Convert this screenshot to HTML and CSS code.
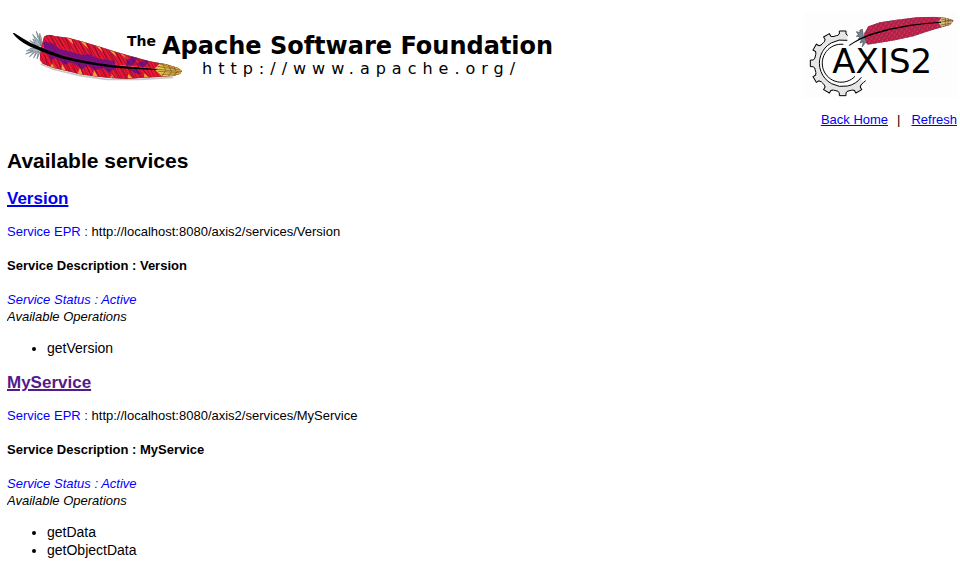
FILE: index.html
```html
<!DOCTYPE html>
<html lang="en">
<head>
    <meta charset="UTF-8">
    <meta name="viewport" content="width=device-width, initial-scale=1.0">
    <title>List Services</title>
    <link rel="stylesheet" href="styles.css">
</head>
<body>
    <header class="banner">
        <svg class="asf-logo" viewBox="7 12 550 86" role="img" aria-label="The Apache Software Foundation">
            <defs>
                <!-- barbs above and below the quill -->
                <pattern id="barbsTop" width="11" height="60" patternUnits="userSpaceOnUse" patternTransform="skewX(32)">
                    <rect width="11" height="60" fill="#f3142f"/>
                    <rect x="6" width="3" height="60" fill="#d81840"/>
                    <rect x="9" width="2" height="60" fill="#7a1030"/>
                </pattern>
                <pattern id="barbsLow" width="11" height="60" patternUnits="userSpaceOnUse" patternTransform="skewX(28)">
                    <rect width="11" height="60" fill="#f5102c"/>
                    <rect x="5" width="3" height="60" fill="#e41c40"/>
                    <rect x="9" width="2" height="60" fill="#8a1030"/>
                </pattern>
                <clipPath id="vane">
                    <path d="M132 50 Q145 40 163 48 L205 53 L250 65 L300 80 L350 96 L400 110 L450 124 L500 133 L535 144 L546 153 L540 162 L520 168 L475 171 L420 174 L380 177 L330 174 L280 169 L240 163 L200 153 L160 144 L128 131 L119 119 L121 90 Z"/>
                </clipPath>
            </defs>
            <g transform="translate(0 20) scale(0.3333)">
                <path d="M122 132 L160 148 L240 167 L320 178 L420 178 L520 172" fill="none" stroke="#c8c8c8" stroke-width="5"/>
                <g clip-path="url(#vane)">
                    <path d="M110 35 H560 V150 L450 145 L300 130 L190 105 L110 75 Z" fill="url(#barbsTop)"/>
                    <path d="M110 75 L190 105 L300 130 L450 145 L560 150 V185 H110 Z" fill="url(#barbsLow)"/>
                    <path d="M132 64 L158 70 L180 88 L215 96 L245 104 L266 103 L300 117 L345 123 L345 137 L300 133 L240 121 L180 105 L132 88 Z M136 89 L180 108 L240 126 L300 135 L350 143 L325 158 L310 143 L285 151 L262 136 L247 148 L215 126 L194 134 L170 114 L153 119 Z M380 122 L400 108 L415 112 L398 136 L378 137 Z M408 132 L435 119 L448 124 L430 143 Z M385 147 L410 146 L425 162 L405 160 Z" fill="#66108a" opacity=".85"/>
                    <path d="M200 54 l14 4 l7 16 z M240 62 l16 6 l8 18 z M285 76 l15 5 l10 16 z M326 90 l17 6 l8 15 z M360 100 l14 5 l8 14 z M150 141 l18 6 l-10 -18 z M182 151 l17 4 l-12 -22 z M232 162 l17 4 l-9 -22 z M278 169 l17 2 l-13 -20 z M330 174 l14 2 l-9 -15 z M382 177 l16 -2 l-13 -13 z M432 174 l15 -2 l-14 -12 z" fill="#f5a13c"/>
                    <g fill="none" stroke="#3b0d2c" stroke-width="1.5">
                        <path d="M150 45 l18 30 M172 48 l18 32 M194 52 l18 35 M216 57 l17 38 M238 62 l17 39 M260 68 l17 38 M282 75 l17 38 M304 82 l17 37 M326 89 l17 34 M348 96 l17 31 M370 101 l16 29 M392 108 l15 26 M414 114 l14 22 M436 120 l14 19"/>
                        <path d="M143 139 l-9 -35 M164 146 l-14 -36 M186 151 l-15 -35 M208 156 l-15 -36 M230 162 l-15 -36 M252 166 l-16 -35 M274 169 l-16 -34 M296 172 l-17 -34 M318 174 l-17 -33 M340 176 l-18 -33 M362 177 l-18 -32 M384 177 l-19 -31 M406 176 l-20 -30 M428 175 l-20 -28 M450 174 l-22 -27"/>
                    </g>
                    <path d="M463 147 L486 124 L550 136 V175 H492 Z" fill="#e6c04c"/>
                    <path d="M463 147 L545 155 M472 139 L540 150 M480 132 L526 146 M475 154 L538 158 M485 163 L530 162 M487 130 l10 20 M505 134 l8 18 M522 140 l6 14 M486 168 l12 -17 M504 170 l12 -17 M522 167 l10 -12" fill="none" stroke="#74511c" stroke-width="2"/>
                    <path d="M132 50 Q145 40 163 48 L205 53 L250 65 L300 80 L350 96 L400 110 L450 124 L500 133 L535 144 L546 153 L540 162 L520 168 L475 171 L420 174 L380 177 L330 174 L280 169 L240 163 L200 153 L160 144 L128 131 L119 119 L121 90 Z" fill="none" stroke="#6c3030" stroke-width="2"/>
                </g>
                <path d="M124 78 L112 58 L98 43 L107 63 L98 57 L105 70 L89 61 L103 75 Z M124 78 L119 55 L109 34 L113 53 M124 80 L125 57 L119 40 L117 65 M118 86 L94 84 L79 93 L98 91 L77 102 L101 95 L88 111 L108 94 L101 114 L115 93 L111 117 L124 89 Z" fill="#a4b2bb" stroke="#4e6470" stroke-width="1.5"/>
                <path d="M38 40 L43 39 Q64 53 94 70 Q140 91 190 108 Q260 126 340 136 Q410 143 465 146 L475 150 Q390 148 330 142 Q248 132 183 115 Q137 101 88 79 Q55 63 38 40 Z" fill="#000"/>
            </g>
            <text class="asf-the" x="127" y="46">The</text>
            <text class="asf-name" x="162" y="54">Apache Software Foundation</text>
            <text class="asf-url" x="202" y="74">http://www.apache.org/</text>
        </svg>

        <svg class="axis-logo" viewBox="12 20 459 258" role="img" aria-label="Axis2">
            <defs>
                <g id="tooth">
                    <path d="M-15 -83 L-10 -88 L-10 -97 H10 L10 -88 L15 -83 L13 -76 H-13 Z" fill="#e6e6e6"/>
                    <path d="M-15 -84 L-10 -88 L-10 -97 H10 L10 -88 L15 -84" fill="none" stroke="#000" stroke-width="3"/>
                </g>
                <clipPath id="vane2">
                    <path d="M193 84 L205 63 L240 51 L290 43 L350 36 L400 34 L435 37 L461 45 L450 59 L420 67 L385 78 L340 93 L285 105 L235 113 L203 118 L192 104 Z"/>
                </clipPath>
                <pattern id="barbsAxis" width="10" height="12" patternUnits="userSpaceOnUse" patternTransform="rotate(35)">
                    <rect width="10" height="12" fill="#c61c43"/>
                    <rect x="5" width="3" height="12" fill="#902a55"/>
                    <rect x="2" y="4" width="3" height="4" fill="#e34b60"/>
                </pattern>
            </defs>
            <rect x="12" y="20" width="459" height="258" fill="#fdfdfd"/>
            <path d="M142 90 A85 85 0 1 0 191 231 L180 220 A70 70 0 1 1 142 105 Z" fill="#e6e6e6"/>
            <path d="M142 90 A85 85 0 1 0 191 231 L197 226" fill="none" stroke="#000" stroke-width="3"/>
            <g transform="translate(128 174)">
                <use href="#tooth"/>
                <use href="#tooth" transform="rotate(-30)"/>
                <use href="#tooth" transform="rotate(-60)"/>
                <use href="#tooth" transform="rotate(-90)"/>
                <use href="#tooth" transform="rotate(-120)"/>
                <use href="#tooth" transform="rotate(-150)"/>
                <use href="#tooth" transform="rotate(180)"/>
                <use href="#tooth" transform="rotate(150)"/>
            </g>
            <path d="M142 105 A70 70 0 1 0 184 216 M130 117 A57 57 0 1 0 165 213" fill="none" stroke="#000" stroke-width="3"/>
            <g clip-path="url(#vane2)">
                <rect x="190" y="30" width="275" height="90" fill="url(#barbsAxis)"/>
                <path d="M414 51 L426 34 H465 V65 H424 Z" fill="#d9bd75"/>
                <path d="M414 51 L458 45 M424 42 l28 5 M422 59 l30 -5 M436 38 v25 M446 39 l-3 22" fill="none" stroke="#66522c" stroke-width="2"/>
                <path d="M193 84 L205 63 L240 51 L290 43 L350 36 L400 34 L435 37 L461 45 L450 59 L420 67 L385 78 L340 93 L285 105 L235 113 L203 118 L192 104 Z" fill="none" stroke="#704052" stroke-width="4" stroke-dasharray="5 3"/>
            </g>
            <path d="M190 91 L187 72 L179 75 L181 82 L169 79 L175 88 L169 93 L181 94 L175 101 L187 98 L180 113 L190 109 L187 124 L199 108 Z" fill="#78858e" stroke="#3f4b57" stroke-width="2"/>
            <path d="M146 120 Q176 98 212 85 Q270 67 330 58 Q380 52 423 49 L423 52 Q377 55 332 62 Q272 71 216 89 Q178 102 149 121 Z" fill="#000"/>
            <text class="axis-name" x="97" y="203">AXIS2</text>
        </svg>
    </header>

    <nav class="links">
        <a href="index.html">Back Home</a>
        <span>|</span>
        <a href="index.html">Refresh</a>
    </nav>

    <h1>Available services</h1>

    <section class="service">
        <h2><a href="#version" id="version">Version</a></h2>
        <p class="epr"><span class="blue">Service EPR :</span> http://localhost:8080/axis2/services/Version</p>
        <h3>Service Description : Version</h3>
        <p class="status"><i class="blue">Service Status : Active</i><br>
        <i>Available Operations</i></p>
        <ul>
            <li>getVersion</li>
        </ul>
    </section>

    <section class="service">
        <h2><a class="seen" href="#myservice" id="myservice">MyService</a></h2>
        <p class="epr"><span class="blue">Service EPR :</span> http://localhost:8080/axis2/services/MyService</p>
        <h3>Service Description : MyService</h3>
        <p class="status"><i class="blue">Service Status : Active</i><br>
        <i>Available Operations</i></p>
        <ul>
            <li>getData</li>
            <li>getObjectData</li>
        </ul>
    </section>
</body>
</html>
```

FILE: styles.css
```css
body {
    margin: 12px 3px 0 7px;
    background: #fff;
    color: #000;
    font-family: "Liberation Sans", Arial, Helvetica, sans-serif;
    font-size: 13px;
    line-height: 17px;
}

/* Logos */
.banner {
    display: flex;
    justify-content: space-between;
    align-items: flex-start;
}
.asf-logo {
    width: 550px;
    height: 86px;
}
.axis-logo {
    width: 153px;
    height: 86px;
}
.asf-the, .asf-name, .asf-url, .axis-name {
    font-family: "DejaVu Sans", Verdana, sans-serif;
}
.asf-the {
    font-size: 14px;
    font-weight: bold;
}
.asf-name {
    font-size: 24px;
    font-weight: bold;
}
.asf-url {
    font-size: 16px;
    letter-spacing: 6px;
}
.axis-name {
    font-size: 102px;
}

/* Links */
a {
    color: #0000ee;
}
a.seen {
    color: #551a8b;
}
.links {
    display: flex;
    justify-content: flex-end;
    gap: 9px;
    margin-top: 13px;
}
.links span {
    margin-right: 2px;
}

/* Headings */
h1 {
    margin: 20px 0 15px;
    font-size: 21px;
    line-height: 26px;
}
h2 {
    margin: 0 0 14px;
    font-size: 17px;
    line-height: 20px;
}
h2 a {
    text-decoration-thickness: 2px;
}
h3 {
    margin: 17px 0;
    font-size: 13px;
    line-height: 17px;
}

/* Services */
.epr, .status {
    margin: 0;
}
.blue {
    color: #0000ff;
}
.service ul {
    margin: 14px 0 16px;
    padding-left: 40px;
    font-size: 14px;
    line-height: 18px;
}
```
